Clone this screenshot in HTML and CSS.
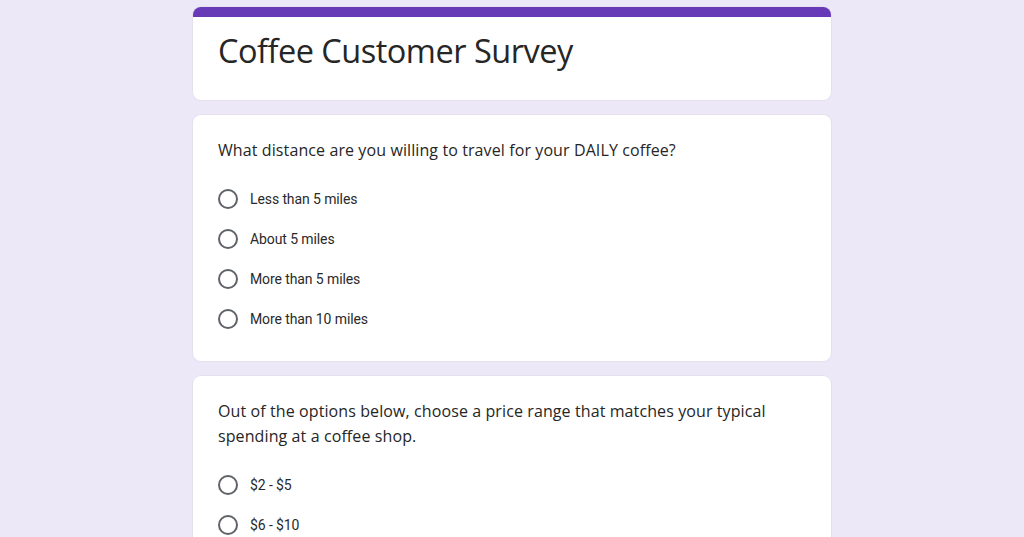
FILE: index.html
```html
<!DOCTYPE html>
<html lang="en">
<head>
<meta charset="utf-8">
<title>Coffee Customer Survey</title>
<link rel="stylesheet" href="styles.css">
</head>
<body>
<main class="form">
  <section class="card header-card">
    <h1 class="title">Coffee Customer Survey</h1>
  </section>
  <section class="card question">
    <p class="q-text">What distance are you willing to travel for your DAILY coffee?</p>
    <ul class="options">
      <li class="option"><span class="radio"></span><span class="label">Less than 5 miles</span></li>
      <li class="option"><span class="radio"></span><span class="label">About 5 miles</span></li>
      <li class="option"><span class="radio"></span><span class="label">More than 5 miles</span></li>
      <li class="option"><span class="radio"></span><span class="label">More than 10 miles</span></li>
    </ul>
  </section>
  <section class="card question">
    <p class="q-text">Out of the options below, choose a price range that matches your typical spending at a coffee shop.</p>
    <ul class="options">
      <li class="option"><span class="radio"></span><span class="label">$2 - $5</span></li>
      <li class="option"><span class="radio"></span><span class="label">$6 - $10</span></li>
    </ul>
  </section>
</main>
</body>
</html>
```
FILE: styles.css
```css
html, body {
  margin: 0;
  padding: 0;
  background: #ede8f8;
}
body {
  font-family: "Open Sans", "Noto Sans", sans-serif;
  color: #202124;
}
.form {
  width: 638px;
  margin: 0 auto;
  padding-top: 7px;
  display: flex;
  flex-direction: column;
  gap: 15px;
}
.card {
  background: #fff;
  border-radius: 8px;
  box-shadow: 0 0 0 1px #e4e0ee;
}
.header-card {
  border-top: 10px solid #673ab7;
  height: 93px;
  box-sizing: border-box;
  padding: 14px 25px 0;
}
.title {
  margin: 0;
  font-family: "Open Sans", sans-serif;
  font-weight: 400;
  font-size: 32.5px;
  letter-spacing: -0.5px;
  line-height: 40px;
  color: #262626;
}
.question {
  padding: 23px 25px 32px;
}
.q-text {
  margin: 0;
  font-size: 16px;
  line-height: 25px;
  letter-spacing: 0.1px;
  color: #262626;
  max-width: 580px;
}
.options {
  list-style: none;
  margin: 26px 0 0;
  padding: 0;
  display: flex;
  flex-direction: column;
  gap: 20px;
}
.option {
  display: flex;
  align-items: center;
  height: 20px;
}
.radio {
  width: 16px;
  height: 16px;
  border: 2px solid #5f6368;
  border-radius: 50%;
  flex: none;
  margin-right: 12px;
}
.label {
  font-family: Roboto, "Liberation Sans", sans-serif;
  font-size: 14px;
  letter-spacing: -0.1px;
  color: #2a2a2a;
}
```
